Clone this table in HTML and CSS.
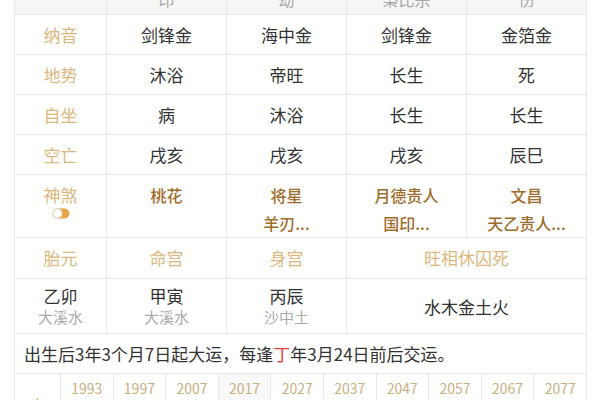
FILE: index.html
```html
<!DOCTYPE html>
<html lang="zh">
<head>
<meta charset="utf-8">
<link rel="stylesheet" href="styles.css">
</head>
<body>
<div class="page">
  <table class="chart">
    <colgroup>
      <col class="c-label"><col class="c-val"><col class="c-val"><col class="c-val"><col class="c-val">
    </colgroup>
    <tr class="r-head">
      <td class="head"></td><td class="head">印</td><td class="head">劫</td><td class="head">枭比杀</td><td class="head">伤</td>
    </tr>
    <tr class="r-std">
      <td class="label">纳音</td><td>剑锋金</td><td>海中金</td><td>剑锋金</td><td>金箔金</td>
    </tr>
    <tr class="r-std">
      <td class="label">地势</td><td>沐浴</td><td>帝旺</td><td>长生</td><td>死</td>
    </tr>
    <tr class="r-std">
      <td class="label">自坐</td><td>病</td><td>沐浴</td><td>长生</td><td>长生</td>
    </tr>
    <tr class="r-std">
      <td class="label">空亡</td><td>戌亥</td><td>戌亥</td><td>戌亥</td><td>辰巳</td>
    </tr>
    <tr class="r-shen">
      <td class="label top">
        <div class="shen-label">神煞</div>
        <svg class="toggle" width="18" height="11" viewBox="0 0 18 11">
          <rect x="0.5" y="0.5" width="17" height="10" rx="5" fill="#e9a54a"/>
          <circle cx="5.5" cy="5.5" r="4.6" fill="#ffffff" stroke="#d6d6d6" stroke-width="0.8"/>
        </svg>
      </td>
      <td class="shen top"><div>桃花</div></td>
      <td class="shen top"><div>将星</div><div>羊刃...</div></td>
      <td class="shen top"><div>月德贵人</div><div>国印...</div></td>
      <td class="shen top"><div>文昌</div><div>天乙贵人...</div></td>
    </tr>
    <tr class="r-lab">
      <td class="label">胎元</td><td class="label">命宫</td><td class="label">身宫</td><td class="label" colspan="2">旺相休囚死</td>
    </tr>
    <tr class="r-gz">
      <td><div class="gz">乙卯</div><div class="sub">大溪水</div></td>
      <td><div class="gz">甲寅</div><div class="sub">大溪水</div></td>
      <td><div class="gz">丙辰</div><div class="sub">沙中土</div></td>
      <td colspan="2" class="wx">水木金土火</td>
    </tr>
    <tr class="r-note">
      <td colspan="5" class="note">出生后3年3个月7日起大运，每逢<span class="red">丁</span>年3月24日前后交运。</td>
    </tr>
  </table>
  <table class="years">
    <colgroup>
      <col class="y-label">
      <col><col><col><col><col><col><col><col><col><col>
    </colgroup>
    <tr class="r-year">
      <td class="yl" rowspan="2"><span class="dy">大运</span></td>
      <td>1993</td><td>1997</td><td>2007</td><td class="cur">2017</td><td>2027</td><td>2037</td><td>2047</td><td>2057</td><td>2067</td><td>2077</td>
    </tr>
    <tr class="r-age">
      <td>3岁</td><td>4岁</td><td>14岁</td><td class="cur">24岁</td><td>34岁</td><td>44岁</td><td>54岁</td><td>64岁</td><td>74岁</td><td>84岁</td>
    </tr>
  </table>
</div>
</body>
</html>
```
FILE: styles.css
```css
html, body {
  margin: 0;
  padding: 0;
  background: #ffffff;
}
body {
  font-family: "Noto Sans CJK SC", "Noto Sans", sans-serif;
  color: #333333;
  width: 600px;
  height: 400px;
  overflow: hidden;
}
.page {
  padding-left: 14px;
  margin-top: -10px;
}
table {
  border-collapse: collapse;
  table-layout: fixed;
}
td {
  border: 1px solid #e8e8e8;
  padding: 0;
  text-align: center;
  vertical-align: middle;
}
.chart {
  width: 573px;
}
.c-label { width: 92px; }
.c-val { width: 120px; }

.r-head td {
  height: 16px;
  background: #f6f6f6;
  color: #a8a8a8;
  font-size: 16px;
  line-height: 16px;
  vertical-align: bottom;
  padding-bottom: 7px;
}
.r-std td {
  height: 39px;
  font-size: 17px;
  line-height: 20px;
}
.label {
  color: #dcb77e;
  font-size: 17px;
}
.top {
  vertical-align: top;
}
.r-shen td {
  height: 62px;
  padding-top: 6px;
  box-sizing: border-box;
}
.shen-label {
  font-size: 17px;
  line-height: 28px;
  height: 26px;
}
.toggle {
  display: block;
  margin: 1px auto 0;
}
.shen {
  color: #a06c2c;
  font-size: 16px;
  font-weight: 500;
  line-height: 28px;
}
.r-lab td {
  height: 40px;
  font-size: 17px;
  line-height: 20px;
}
.r-gz td {
  height: 54px;
}
.gz {
  font-size: 17px;
  line-height: 21px;
  color: #333333;
}
.sub {
  font-size: 15px;
  line-height: 21px;
  color: #ababab;
}
.wx {
  font-size: 17px;
  color: #333333;
}
.r-note td {
  height: 39px;
  text-align: left;
  padding-left: 9px;
  font-size: 17px;
  color: #333333;
}
.red {
  color: #e0443a;
}
.years {
  width: 573px;
}
.years td {
  border-top: none;
}
.y-label { width: 46px; }
.r-year td {
  height: 20px;
  font-size: 14px;
  line-height: 18px;
  color: #c8b080;
}
.r-year td.cur {
  background: #f8f8f8;
}
.yl {
  vertical-align: top;
  padding-top: 21px;
}
.dy {
  display: inline-block;
  width: 17px;
  color: #e9a54a;
  font-size: 16px;
  line-height: 20px;
}
.r-age td {
  height: 24px;
  font-size: 14px;
  color: #999999;
}
```
